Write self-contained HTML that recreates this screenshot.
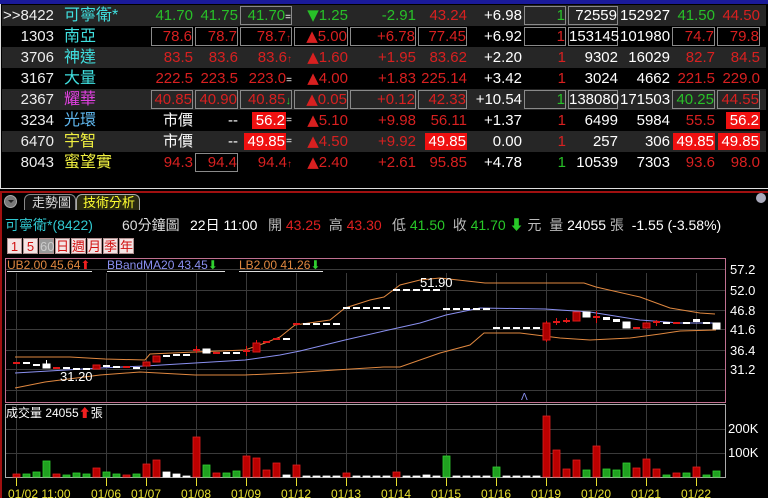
<!DOCTYPE html>
<html><head><meta charset="utf-8"><style>
*{margin:0;padding:0;box-sizing:border-box}
body{width:768px;height:498px;background:#000;overflow:hidden;position:relative;font-family:"Liberation Sans","Noto Sans CJK TC",sans-serif;color:#fff}
.a{position:absolute;white-space:nowrap}
.row{position:absolute;left:2px;width:764px;height:21px;font-size:15px}
.row span{position:absolute;top:2px;line-height:17px;text-align:right}
.g{background:#262626}
.r{color:#d82020}.gr{color:#28c028}.w{color:#fff}
.bx{border:1px solid #8a8a8a;height:19px;top:1px!important;line-height:17px!important}
.rb{background:#f01010;color:#fff}
.btn{position:absolute;top:238px;height:16px;width:15px;background:#f4e4e4;color:#d01010;font-size:13px;text-align:center;line-height:16px;border:1px solid #b09090}
</style></head><body>
<div class="a" style="left:0;top:0;width:768px;height:4px;background:#1a1a9a"></div>
<div class="a" style="left:0;top:4px;width:768px;height:185px;border:1px solid #ddd;border-top:none;border-right:none"></div>
<div id="rows"></div>

<div class="a" style="left:0;top:191px;width:768px;height:2px;background:#a01010"></div>
<div class="a" style="left:0;top:193px;width:2px;height:305px;background:#a01010"></div>
<div class="a" style="left:4px;top:195px;width:13px;height:13px;border-radius:50%;background:#777;border:1px solid #aaa"></div>
<div class="a" style="left:8px;top:200px;width:0;height:0;border-left:3px solid transparent;border-right:3px solid transparent;border-top:3px solid #222"></div>
<div class="a" style="left:24px;top:194px;width:52px;height:16px;background:#111;border:1px solid #888;border-bottom:none;border-radius:6px 6px 0 0;font-size:13px;line-height:15px;padding-left:7px;color:#ddd">走勢圖</div>
<div class="a" style="left:76px;top:194px;width:64px;height:16px;background:#2a2a10;border:1px solid #aaa;border-bottom:none;border-radius:6px 6px 0 0;font-size:13px;line-height:15px;padding-left:6px;color:#ffff30">技術分析</div>
<div class="a" style="left:756px;top:193px;width:10px;height:10px;border-radius:50%;background:#aab"></div>

<div class="a" style="top:217px;font-size:14px;line-height:17px;left:5px;color:#30c8d0">可寧衛*(8422)</div>
<div class="a" style="top:217px;font-size:14px;line-height:17px;left:122px;color:#ddd">60分鐘圖</div>
<div class="a" style="top:217px;font-size:14px;line-height:17px;left:190px">22日 11:00</div>
<div class="a" style="top:217px;font-size:14px;line-height:17px;left:268px;color:#bbb">開 <span style="color:#e02020">43.25</span> &nbsp;高 <span style="color:#e02020">43.30</span></div>
<div class="a" style="top:217px;font-size:14px;line-height:17px;left:392px;color:#bbb">低 <span style="color:#28c828">41.50</span> &nbsp;收 <span style="color:#28c828">41.70 ⬇</span> 元 &nbsp;量 <span style="color:#fff">24055</span> 張 &nbsp;<span style="color:#fff">-1.55 (-3.58%)</span></div>

<div class="btn" style="left:7px">1</div><div class="btn" style="left:23px">5</div><div class="btn" style="left:39px;background:#999;color:#ccc">60</div><div class="btn" style="left:55px">日</div><div class="btn" style="left:71px">週</div><div class="btn" style="left:87px">月</div><div class="btn" style="left:103px">季</div><div class="btn" style="left:119px">年</div>

<svg class="a" style="left:0;top:0" width="768" height="498" id="sv">
<g stroke="#3a3a3a" stroke-width="1" id="grid"></g>
<rect x="5.5" y="258.5" width="720" height="144" fill="none" stroke="#c07090"/>
<rect x="5.5" y="404.5" width="720" height="73" fill="none" stroke="#aaa"/>
<polyline fill="none" stroke="#e08840" stroke-width="1" points="15,357 70,357 105,359 145,360 150,354 195,352 245,350 265,343 280,337 295,325 330,320 345,308 370,300 384,297 400,285 420,280 440,278 485,283 530,283 584,283 596,287 640,297 670,308 700,313 715,314"/>
<polyline fill="none" stroke="#8a90f0" stroke-width="1" points="15,373 100,368 145,366 195,363 245,360 280,355 300,351 345,340 384,331 420,323 446,315 480,308 545,309 590,312 640,320 680,323 716,323"/>
<polyline fill="none" stroke="#e08840" stroke-width="1" points="15,388 45,382 100,375 140,372 195,375 245,375 290,373 335,370 384,367 400,367 440,353 470,345 484,333 520,333 560,338 590,340 630,338 660,334 680,331 716,330"/>
<g id="cd"></g><g id="vb"></g>
<g font-size="13" fill="#fff" font-family="Liberation Sans,sans-serif">
<text x="60" y="381">31.20</text><text x="420" y="287">51.90</text>
<text x="730" y="274">57.2</text><text x="730" y="295">52.0</text><text x="730" y="315">46.8</text><text x="730" y="334">41.6</text><text x="730" y="355">36.4</text><text x="730" y="374">31.2</text>
<text x="728" y="433">200K</text><text x="728" y="457">100K</text>
<text x="6" y="417" font-size="12">成交量 24055<tspan fill="#f02020">⬆</tspan>張</text>
</g>
<text x="521" y="400" font-size="10" fill="#8a90f0">Λ</text>
<g font-size="12" font-family="Liberation Sans,sans-serif">
<text x="7" y="269" fill="#e08840">UB2.00 45.64<tspan fill="#f02020">⬆</tspan></text>
<text x="107" y="269" fill="#8a90f0">BBandMA20 43.45<tspan fill="#30d030">⬇</tspan></text>
<text x="239" y="269" fill="#e08840">LB2.00 41.26<tspan fill="#30d030">⬇</tspan></text>
</g>
<g stroke="#ddd"><line x1="7" y1="271.5" x2="92" y2="271.5"/><line x1="107" y1="271.5" x2="225" y2="271.5"/><line x1="239" y1="271.5" x2="323" y2="271.5"/></g>
<g id="dt" fill="#e8e030" font-size="12" font-family="Liberation Sans,sans-serif"></g>
</svg>
<script>
var R=document.getElementById('rows'),h='';
var rows=[
['>>8422','可寧衛*','#40e0e0',[['41.70','gr'],['41.75','gr'],['41.70=','gr','b'],['▼1.25','gr'],['-2.91','gr'],['43.24','r'],['+6.98','w'],['1','gr','b'],['72559','w','b'],['152927','w'],['41.50','gr'],['44.50','r']]],
['1303','南亞','#40e0e0',[['78.6','r','b'],['78.7','r','b'],['78.7↑','r','b'],['▲5.00','r','b'],['+6.78','r','b'],['77.45','r','b'],['+6.92','w'],['1','r','b'],['153145','w','b'],['101980','w'],['74.7','r','b'],['79.8','r','b']]],
['3706','神達','#40e0e0',[['83.5','r'],['83.6','r'],['83.6↑','r'],['▲1.60','r'],['+1.95','r'],['83.62','r'],['+2.20','w'],['1','r'],['9302','w'],['16029','w'],['82.7','r'],['84.5','r']]],
['3167','大量','#40e0e0',[['222.5','r'],['223.5','r'],['223.0=','r'],['▲4.00','r'],['+1.83','r'],['225.14','r'],['+3.42','w'],['1','r'],['3024','w'],['4662','w'],['221.5','r'],['229.0','r']]],
['2367','耀華','#e040e0',[['40.85','r','b'],['40.90','r','b'],['40.85↓','r','b'],['▲0.05','r','b'],['+0.12','r','b'],['42.33','r','b'],['+10.54','w'],['1','gr','b'],['138080','w','b'],['171503','w'],['40.25','gr','b'],['44.55','r','b']]],
['3234','光環','#60b8f0',[['市價','w'],['--','w'],['56.2=','w','h'],['▲5.10','r'],['+9.98','r'],['56.11','r'],['+1.37','w'],['1','r'],['6499','w'],['5984','w'],['55.5','r'],['56.2','w','h']]],
['6470','宇智','#f0f040',[['市價','w'],['--','w'],['49.85=','w','h'],['▲4.50','r'],['+9.92','r'],['49.85','w','h'],['0.00','w'],['1','r'],['257','w'],['306','w'],['49.85','w','h'],['49.85','w','h']]],
['8043','蜜望實','#f0f040',[['94.3','r'],['94.4','r','b'],['94.4↑','r'],['▲2.40','r'],['+2.61','r'],['95.85','r'],['+4.78','w'],['1','gr'],['10539','w'],['7303','w'],['93.6','r'],['98.0','r']]]];
var cols=[[151,193],[195,238],[240,292],[294,348],[350,416],[418,467],[470,522],[524,566],[568,618],[620,670],[672,715],[717,760]];
rows.forEach(function(r,i){
 h+='<div class="row'+(i%2==0?' g':'')+'" style="top:'+(5+21*i)+'px"><span style="left:'+(i==0?1:8)+'px;width:'+(i==0?50:44)+'px;color:#eee">'+r[0]+'</span><span style="left:62px;text-align:left;color:'+r[2]+';font-size:16px">'+r[1]+'</span>';
 r[3].forEach(function(c,j){var L=cols[j][0]-2,W=cols[j][1]-cols[j][0],t=c[0],cl=c[1];
  if(c[2]=='h'){var e=t.endsWith('=');var tt=e?t.slice(0,-1):t;var ww=tt.length*8.5;
   h+='<span class="rb" style="left:'+(L+W-ww-(e?6:0))+'px;width:'+ww+'px;padding-right:1px">'+tt+'</span>'+(e?'<span style="left:'+(L+W-6)+'px;width:6px;font-size:10px" class="w">=</span>':'');}
  else{ if(t.endsWith('↑'))t=t.slice(0,-1)+'<small style="font-size:10px">↑</small>';
   if(t.endsWith('↓'))t=t.slice(0,-1)+'<small style="font-size:11px;color:#30d030">↓</small>';
   if(t.endsWith('='))t=t.slice(0,-1)+'<small style="font-size:10px;color:#fff">=</small>';
   if(t[0]=='▲'||t[0]=='▼')t='<span style="position:static;font-size:15px;font-family:DejaVu Sans">'+t[0]+'</span>'+t.slice(1);
   h+='<span class="'+cl+(c[2]=='b'?' bx':'')+'" style="left:'+L+'px;width:'+W+'px">'+t+'</span>';}
 });h+='</div>';});
R.innerHTML=h;
var g='';[16,106,146,196,246,296,346,396,446,496,546,596,646,696].forEach(function(x){g+='<line x1="'+(x+.5)+'" y1="273" x2="'+(x+.5)+'" y2="402"/><line x1="'+(x+.5)+'" y1="405" x2="'+(x+.5)+'" y2="477"/>';});
[269,290,310,329,350,369,390].forEach(function(y){g+='<line x1="6" y1="'+(y+.5)+'" x2="725" y2="'+(y+.5)+'"/>';});
[429,453].forEach(function(y){g+='<line x1="6" y1="'+(y+.5)+'" x2="725" y2="'+(y+.5)+'"/>';});
document.getElementById('grid').innerHTML=g;
var C=[['r',363,363],['w',363,363],['w',365,365],['w',364,368,360,368],['r',368,368],['w',368,368],['w',369,369],['w',369,369],['r',365,369],['w',365,367],['w',367,367],['r',367,367],['w',368,368],['r',362,366],['r',356,362],['w',356,356],['w',355,355],['w',355,355],['r',349,351,346,353],['w',349,353],['r',353,353],['w',353,353],['w',353,353],['r',351,351,346,356],['r',343,352,340,352],['r',341,343],['r',339,339],['w',339,339],['r',324,324],['w',324,324],['w',324,324],['w',324,324],['w',324,324],['w',308,308],['w',308,308],['w',308,308],['w',308,308],['w',308,308],['w',290,290],['w',290,290],['w',290,290],['w',290,290],['w',290,290],['w',309,309],['w',309,309],['w',309,309],['w',309,309],['w',309,309],['w',328,328],['w',328,328],['w',328,328],['w',328,328],['w',328,328],['r',323,340,321,342],['r',322,322,318,325],['r',321,321,318,323],['r',312,321],['w',312,317],['r',317,317,311,323],['w',317,320],['w',319,322],['w',322,328],['r',328,328],['r',323,328],['r',322,322,320,326],['w',323,323],['r',323,323],['w',323,323],['w',319,322],['w',323,323],['w',323,329]];
var s='';C.forEach(function(c,i){var x=16+10*i;var col=c[0]=='r'?'#e01818':'#fff';
 if(c[3])s+='<line x1="'+(x+.5)+'" y1="'+c[3]+'" x2="'+(x+.5)+'" y2="'+c[4]+'" stroke="'+col+'"/>';
 var hh=Math.max(c[2]-c[1],2);s+='<rect x="'+(x-3)+'" y="'+(c[2]==c[1]?c[1]-1:c[1])+'" width="7" height="'+hh+'" fill="'+(c[0]=='r'&&hh>3?'#a00':col)+'" stroke="'+(hh>3?col:'none')+'"/>';});
document.getElementById('cd').innerHTML=s;
var V=[[474,'r'],[474,'g'],[472,'g'],[461,'g'],[474,'r'],[475,'g'],[473,'g'],[474,'g'],[468,'r'],[472,'g'],[474,'g'],[475,'r'],[474,'g'],[464,'r'],[460,'r'],[472,'w'],[474,'w'],[476,'w'],[437,'r'],[465,'g'],[473,'r'],[473,'g'],[471,'g'],[456,'r'],[458,'r'],[470,'r'],[463,'r'],[475,'w'],[465,'r'],[476,'w'],[476,'w'],[476,'w'],[476,'w'],[473,'r'],[476,'w'],[476,'w'],[476,'w'],[476,'w'],[472,'r'],[476,'w'],[476,'w'],[475,'w'],[476,'w'],[456,'g'],[476,'w'],[476,'w'],[476,'w'],[476,'w'],[467,'g'],[476,'w'],[476,'w'],[476,'w'],[476,'w'],[416,'r'],[450,'r'],[469,'r'],[460,'r'],[470,'g'],[446,'r'],[469,'g'],[470,'g'],[463,'g'],[468,'r'],[459,'r'],[469,'r'],[475,'g'],[473,'r'],[473,'g'],[467,'r'],[475,'g'],[471,'g']];
s='';V.forEach(function(v,i){var x=16+10*i;var f=v[1]=='r'?'#b00':v[1]=='g'?'#20a020':'#fff';var st=v[1]=='r'?'#e02020':v[1]=='g'?'#30d030':'#fff';
 s+='<rect x="'+(x-3)+'" y="'+v[0]+'" width="7" height="'+(477-v[0])+'" fill="'+f+'" stroke="'+st+'" stroke-width="0.8"/>';});
document.getElementById('vb').innerHTML=s;
var D=[[16,'01/02 11:00'],[106,'01/06'],[146,'01/07'],[196,'01/08'],[246,'01/09'],[296,'01/12'],[346,'01/13'],[396,'01/14'],[446,'01/15'],[496,'01/16'],[546,'01/19'],[596,'01/20'],[646,'01/21'],[696,'01/22']];
s='';D.forEach(function(d){s+='<rect x="'+d[0]+'" y="478" width="1" height="8"/><text x="'+(d[0]-(d[1].length>5?8:15))+'" y="498">'+d[1]+'</text>';});
document.getElementById('dt').innerHTML=s;
</script>
</body></html>
